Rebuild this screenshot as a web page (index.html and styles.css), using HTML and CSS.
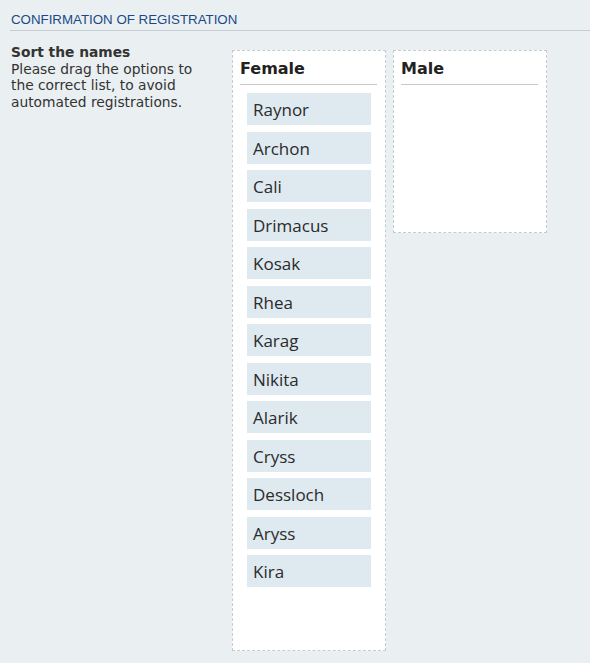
FILE: index.html
```html
<!DOCTYPE html>
<html lang="en">
<head>
    <meta charset="UTF-8">
    <title>Confirmation of registration</title>
    <link rel="stylesheet" href="styles.css">
</head>
<body>
    <div class="panel">
        <h3 class="panel-title">CONFIRMATION OF REGISTRATION</h3>

        <div class="captcha">
            <div class="captcha-info">
                <strong>Sort the names</strong>
                <p>Please drag the options to the correct list, to avoid automated registrations.</p>
            </div>

            <div class="bucket bucket-female">
                <h4>Female</h4>
                <ul class="names">
                    <li>Raynor</li>
                    <li>Archon</li>
                    <li>Cali</li>
                    <li>Drimacus</li>
                    <li>Kosak</li>
                    <li>Rhea</li>
                    <li>Karag</li>
                    <li>Nikita</li>
                    <li>Alarik</li>
                    <li>Cryss</li>
                    <li>Dessloch</li>
                    <li>Aryss</li>
                    <li>Kira</li>
                </ul>
            </div>

            <div class="bucket bucket-male">
                <h4>Male</h4>
                <ul class="names">
                    <!-- names dropped here -->
                </ul>
            </div>
        </div>
    </div>
</body>
</html>
```

FILE: styles.css
```css
html, body {
    margin: 0;
    padding: 0;
    background-color: #eaeff2;
}
body {
    font-family: "DejaVu Sans", Verdana, sans-serif;
    font-size: 13.8px;
    color: #333;
}
.panel {
    padding: 8px 0 0 10px;
    min-height: 655px;
}
.panel-title {
    margin: 0;
    padding: 4px 0 3px 1px;
    font-family: "Liberation Sans", Arial, sans-serif;
    font-size: 13.3px;
    font-weight: normal;
    color: #194a86;
    border-bottom: 1px solid #c6cdd2;
}
.captcha {
    display: flex;
    align-items: flex-start;
    padding-top: 11px;
}
.captcha-info {
    width: 196px;
    padding: 2px 0 0 1px;
    margin-right: 25px;
    line-height: 16.5px;
}
.captcha-info strong {
    display: block;
}
.captcha-info p {
    margin: 0;
}
.bucket {
    width: 152px;
    margin-top: 8px;
    margin-right: 7px;
    background-color: #fff;
    border: 1px dashed #c4ccd1;
}
.bucket h4 {
    margin: 7px 8px 0 7px;
    padding-bottom: 4px;
    font-size: 16px;
    line-height: 22px;
    color: #222;
    border-bottom: 1px solid #c8c8c8;
}
.names {
    list-style: none;
    margin: 0;
    padding: 8px 14px 63px;
}
.bucket-male .names {
    min-height: 76px;
}
.names li {
    height: 32px;
    line-height: 33px;
    margin-bottom: 6.5px;
    padding-left: 6px;
    background-color: #dee9f0;
    font-family: "Open Sans", "DejaVu Sans", sans-serif;
    font-size: 17px;
    color: #2b2b2b;
    cursor: move;
}
.names li:last-child {
    margin-bottom: 0;
}
```
